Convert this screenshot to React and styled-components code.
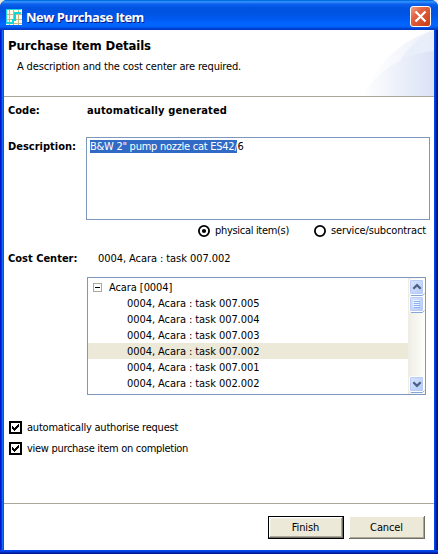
import React from "react";
import styled, { createGlobalStyle } from "styled-components";

const Page = createGlobalStyle`
  * { box-sizing: border-box; }
  body { margin: 0; background: #ece9d8; color: #000; }
  svg { display: block; flex: none; }
`;

const Frame = styled.div`
  width: 438px;
  height: 554px;
  display: flex;
  flex-direction: column;
  border-radius: 7px 7px 0 0;
  overflow: hidden;
  background: linear-gradient(to right, #0019cf 0, #0019cf 1px, #0831d9 1px, #0831d9 2px, #166aee 2px, #166aee 3px, #0855dd 3px, #0855dd 4px, #0046e8 4px, #0046e8 435px, #0036d8 435px, #0036d8 436px, #001c9c 436px, #00138c 438px);
  font-family: "DejaVu Sans Condensed", "DejaVu Sans", sans-serif;
  font-size: 11px;
  line-height: 13px;
`;

const TitleBar = styled.div`
  height: 30px;
  flex: none;
  display: flex;
  align-items: center;
  padding: 3px 7px 0 6px;
  background: linear-gradient(#0841c8 0, #0997ff 1px, #3a8cf8 2px, #0a62ee 4px, #0053e0 8px, #0054e3 14px, #005cf5 20px, #0066ff 24px, #0062f8 27px, #0046d8 28px, #0037c4 30px);
`;

const Title = styled.span`
  flex: 1;
  margin-left: 4px;
  color: #fff;
  font: bold 13px/16px "Open Sans", "Noto Sans", sans-serif;
  letter-spacing: -0.5px;
  text-shadow: 1px 1px 0 #0a1883;
  white-space: nowrap;
`;

const Client = styled.div`
  width: 430px;
  height: 520px;
  margin-left: 4px;
  flex: none;
  display: flex;
  flex-direction: column;
  background: #fff;
`;

const BottomEdge = styled.div`
  height: 4px;
  background: linear-gradient(#0046e8 0, #0046e8 1px, #0036d8 2px, #001c9c 3px, #00138c 4px);
`;

const Header = styled.header`
  height: 67px;
  flex: none;
  display: flex;
  justify-content: space-between;
  border-bottom: 1px solid #aca899;
`;

const HeaderText = styled.div`
  padding: 7px 0 0 4px;
  white-space: nowrap;
`;

const Heading = styled.h1`
  margin: 0;
  font-size: 13px;
  line-height: 17px;
  letter-spacing: -0.1px;
`;

const Label = styled.span`
  display: block;
  white-space: nowrap;
  font-weight: ${(p) => (p.$bold ? 700 : 400)};
  letter-spacing: ${(p) => p.$track || 0}px;
`;

const Hint = styled(Label)`
  margin: 6px 0 0 9px;
`;

const Form = styled.main`
  height: 406px;
  flex: none;
  padding: 7px 4px 0;
`;

const Field = styled.div`
  display: grid;
  grid-template-columns: ${(p) => p.$labelWidth}px 1fr;
  margin-top: ${(p) => p.$gap || 0}px;
`;

const FieldLabel = styled(Label)`
  padding-top: ${(p) => p.$drop || 0}px;
`;

const TextArea = styled.div`
  width: 344px;
  height: 83px;
  padding: 2px 3px;
  border: 1px solid #7f96bd;
  white-space: nowrap;
  letter-spacing: -0.26px;
`;

const Selected = styled.span`
  background: #316ac5;
  color: #fff;
`;

const Radios = styled.div`
  display: flex;
  height: 13px;
  margin: 4px 0 0 190px;
`;

const Radio = styled.label`
  display: flex;
  align-items: center;
  gap: 5px;
  flex: none;
  width: 116px;
`;

const Tree = styled.div`
  display: flex;
  width: 339px;
  height: 118px;
  margin: 12px 0 0 79px;
  border: 1px solid #7f96bd;
`;

const TreeRows = styled.div`
  flex: 1;
  padding-top: 1px;
`;

const TreeRow = styled.div`
  display: flex;
  align-items: center;
  height: 16px;
  gap: 7px;
  padding-left: ${(p) => (p.$child ? 39 : 5)}px;
  background: ${(p) => (p.$active ? "#ece9d8" : "transparent")};
`;

const ScrollBar = styled.div`
  width: 17px;
  display: flex;
  flex-direction: column;
  padding: 1px 0 1px 1px;
  background: linear-gradient(to right, #eeede5, #fefefb);
`;

const Track = styled.div`
  flex: 1;
`;

const Checks = styled.div`
  display: flex;
  flex-direction: column;
  gap: 8px;
  margin: 26px 0 0 1px;
`;

const Check = styled.label`
  display: flex;
  align-items: center;
  height: 13px;
  gap: 5px;
`;

const Footer = styled.footer`
  flex: 1;
  display: flex;
  justify-content: flex-end;
  gap: 5px;
  padding: 12px 9px 0 0;
  border-top: 1px solid #aca899;
`;

const Button = styled.button`
  width: 76px;
  height: 23px;
  padding: 0 1px 1px 0;
  border: ${(p) => (p.$default ? "1px solid #000" : "0")};
  border-radius: 0;
  background: #ece9d8;
  box-shadow: ${(p) =>
    p.$default
      ? "inset -1px -1px #716f64, inset 1px 1px #fff, inset -2px -2px #aca899, inset 2px 2px #f1efe2"
      : "inset -1px -1px #716f64, inset 1px 1px #fff, inset -2px -2px #aca899"};
  font: inherit;
  letter-spacing: -0.13px;
  color: #000;
`;

const AppIcon = () => (
  <svg width="16" height="16" shapeRendering="crispEdges">
    <rect width="16" height="16" fill="#fffde8" />
    <path d="M0 5.5H16M0 10.5H16M0 14.5H16M3.5 0V16M7.5 0V16M12.5 0V16" stroke="#c8b888" />
    <path d="M0 .5H15M.5 0V15" stroke="#19dbe0" />
    <path d="M1 14H7V11H9V4H15" fill="none" stroke="#12d6dc" strokeWidth="2" />
  </svg>
);

const CloseIcon = () => (
  <svg width="21" height="21">
    <defs>
      <linearGradient id="close" x2="1" y2="1">
        <stop offset="0" stopColor="#f0a48c" />
        <stop offset=".35" stopColor="#e26343" />
        <stop offset="1" stopColor="#c93a12" />
      </linearGradient>
    </defs>
    <rect x=".5" y=".5" width="20" height="20" rx="2.5" fill="url(#close)" stroke="#fff" />
    <path d="M5.5 5.5L15.5 15.5M15.5 5.5L5.5 15.5" stroke="#fff" strokeWidth="2.3" />
  </svg>
);

const Swoosh = () => (
  <svg width="76" height="66">
    <defs>
      <linearGradient id="outer">
        <stop offset=".1" stopColor="#fff" />
        <stop offset="1" stopColor="#ebeffa" />
      </linearGradient>
      <linearGradient id="inner">
        <stop offset="0" stopColor="#fff" />
        <stop offset="1" stopColor="#dae2f5" />
      </linearGradient>
    </defs>
    <path d="M4 66C18 35 42 10 76 0V66Z" fill="url(#outer)" />
    <path d="M38 38C46 22 58 8 76 1V30Z" fill="#e6ecf9" opacity=".7" />
    <path d="M4 66C20 40 48 23 76 21V66Z" fill="url(#inner)" />
  </svg>
);

const RadioIcon = ({ on }) => (
  <svg width="12" height="12">
    <circle cx="6" cy="6" r="5.1" fill="#fff" stroke="#000" strokeWidth="1.8" />
    {on && <circle cx="6" cy="6" r="2.1" />}
  </svg>
);

const CheckIcon = () => (
  <svg width="13" height="13" shapeRendering="crispEdges">
    <rect x="1" y="1" width="11" height="11" fill="#fff" stroke="#000" strokeWidth="2" />
    <path d="M3 5h1v1h1v1h1v-1h1v-1h1v-1h1v-1h1v3h-1v1h-1v1h-1v1h-1v1h-1v-1h-1v-1h-1z" />
  </svg>
);

const MinusBox = () => (
  <svg width="9" height="9" shapeRendering="crispEdges">
    <rect x=".5" y=".5" width="8" height="8" fill="#fff" stroke="#aca899" />
    <path d="M2 4.5H7" stroke="#000" />
  </svg>
);

const glyphs = {
  up: <path d="M4.3 9.8L8 6.1L11.7 9.8" fill="none" stroke="#4d6185" strokeWidth="2.2" />,
  down: <path d="M4.3 6.2L8 9.9L11.7 6.2" fill="none" stroke="#4d6185" strokeWidth="2.2" />,
  grip: (
    <g shapeRendering="crispEdges">
      <path d="M4 4.5h6M4 6.5h6M4 8.5h6M4 10.5h6" stroke="#eef4fe" />
      <path d="M5 5.5h6M5 7.5h6M5 9.5h6M5 11.5h6" stroke="#8cb0f8" />
    </g>
  ),
};

const ScrollPart = ({ kind }) => (
  <svg width="16" height="17">
    <defs>
      <linearGradient id={`part-${kind}`} x2="1" y2="1">
        <stop offset="0" stopColor="#dbe6ff" />
        <stop offset="1" stopColor="#b4c9f9" />
      </linearGradient>
    </defs>
    <path d="M2 16.5H13.5L15.5 14.5" fill="none" stroke="#84a5d9" />
    <rect x=".5" y=".5" width="14" height="15" rx="1.5" fill={`url(#part-${kind})`} stroke="#fff" />
    <rect x="1.5" y="1.5" width="12" height="13" rx="1" fill="none" stroke="#b8cbf6" />
    {glyphs[kind]}
  </svg>
);

const tasks = ["007.005", "007.004", "007.003", "007.002", "007.001", "002.002"];

export default function App() {
  return (
    <Frame>
      <Page />
      <TitleBar>
        <AppIcon />
        <Title>New Purchase Item</Title>
        <CloseIcon />
      </TitleBar>
      <Client>
        <Header>
          <HeaderText>
            <Heading>Purchase Item Details</Heading>
            <Hint $track={-0.16}>A description and the cost center are required.</Hint>
          </HeaderText>
          <Swoosh />
        </Header>
        <Form>
          <Field $labelWidth={79}>
            <FieldLabel $bold>Code:</FieldLabel>
            <Label $bold $track={0.12}>automatically generated</Label>
          </Field>
          <Field $labelWidth={78} $gap={20}>
            <FieldLabel $bold $drop={3}>Description:</FieldLabel>
            <TextArea>
              <Selected>B&amp;W 2" pump nozzle cat ES42/</Selected>6
            </TextArea>
          </Field>
          <Radios>
            <Radio>
              <RadioIcon on />
              <Label $track={-0.31}>physical item(s)</Label>
            </Radio>
            <Radio>
              <RadioIcon />
              <Label $track={-0.14}>service/subcontract</Label>
            </Radio>
          </Radios>
          <Field $labelWidth={90} $gap={15}>
            <FieldLabel $bold>Cost Center:</FieldLabel>
            <Label $track={-0.07}>0004, Acara : task 007.002</Label>
          </Field>
          <Tree>
            <TreeRows>
              <TreeRow>
                <MinusBox />
                <Label $track={-0.08}>Acara [0004]</Label>
              </TreeRow>
              {tasks.map((task) => (
                <TreeRow key={task} $child $active={task === "007.002"}>
                  <Label $track={-0.07}>0004, Acara : task {task}</Label>
                </TreeRow>
              ))}
            </TreeRows>
            <ScrollBar>
              <ScrollPart kind="up" />
              <ScrollPart kind="grip" />
              <Track />
              <ScrollPart kind="down" />
            </ScrollBar>
          </Tree>
          <Checks>
            <Check>
              <CheckIcon />
              <Label $track={-0.22}>automatically authorise request</Label>
            </Check>
            <Check>
              <CheckIcon />
              <Label $track={-0.3}>view purchase item on completion</Label>
            </Check>
          </Checks>
        </Form>
        <Footer>
          <Button $default>Finish</Button>
          <Button>Cancel</Button>
        </Footer>
      </Client>
      <BottomEdge />
    </Frame>
  );
}
